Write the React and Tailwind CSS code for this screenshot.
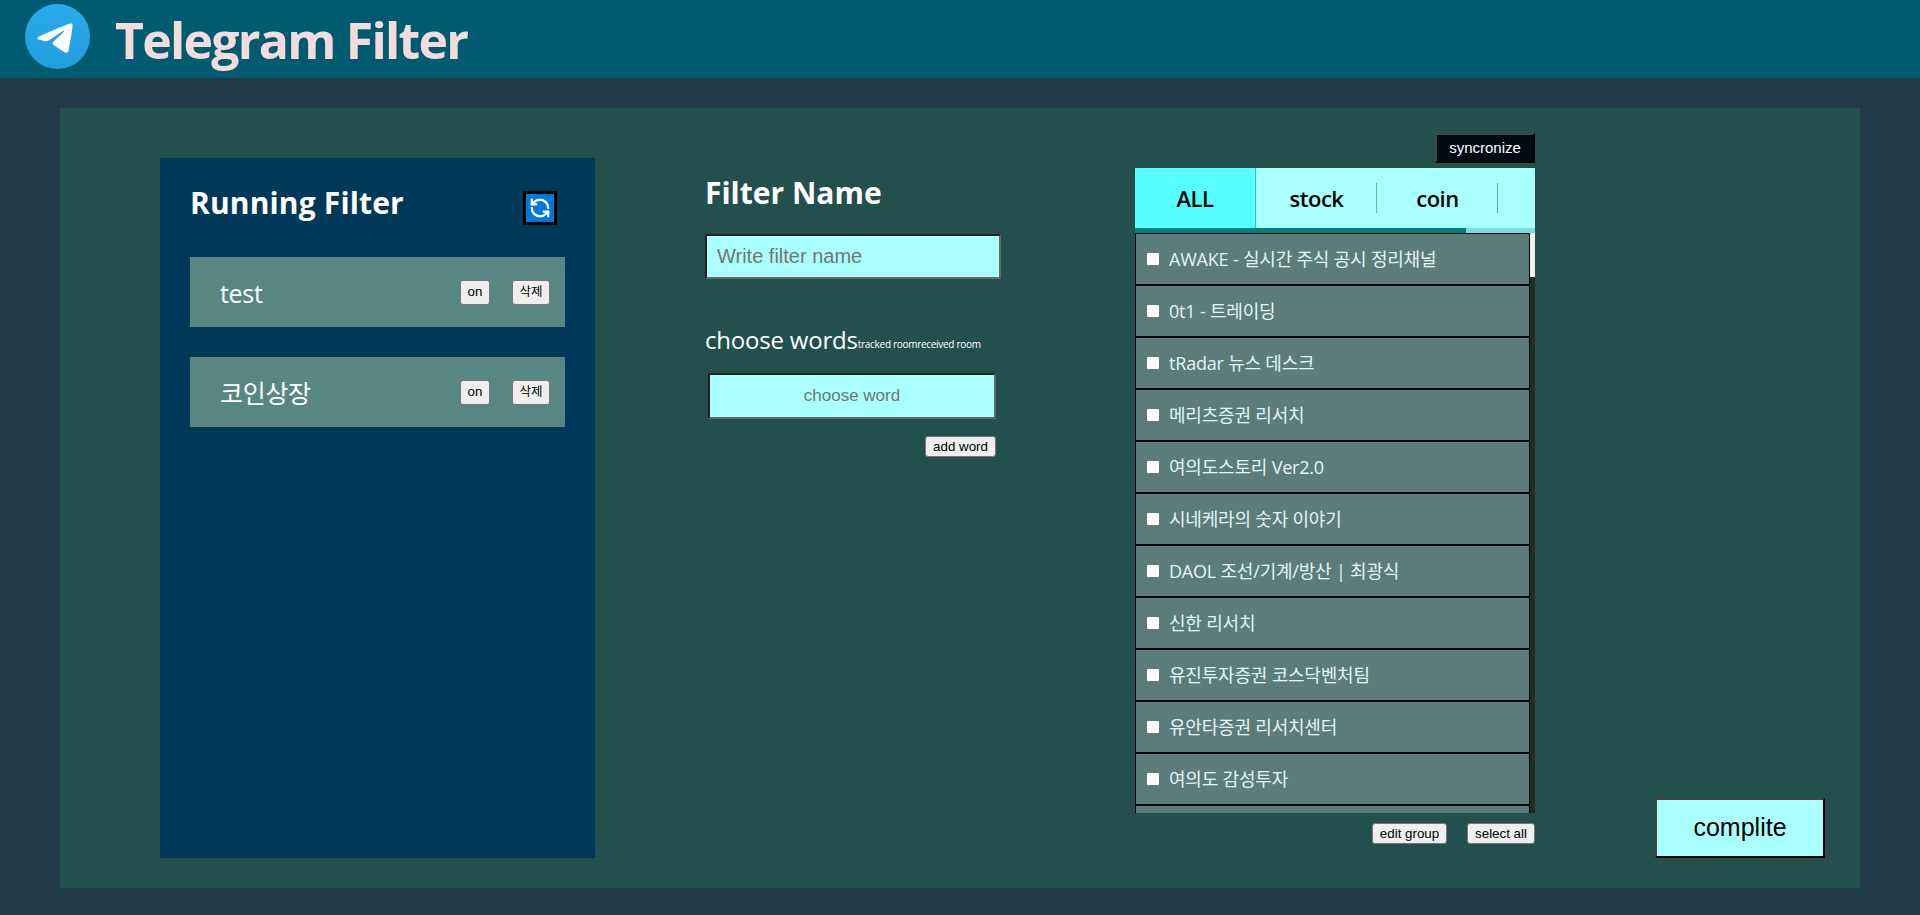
import { RefreshCcw } from "lucide-react";

const sans = "font-['Open_Sans','Noto_Sans_CJK_KR',sans-serif]";
const arial = "font-['Liberation_Sans','Noto_Sans_CJK_KR',sans-serif]";

const rooms = [
  "AWAKE - 실시간 주식 공시 정리채널",
  "0t1 - 트레이딩",
  "tRadar 뉴스 데스크",
  "메리츠증권 리서치",
  "여의도스토리 Ver2.0",
  "시네케라의 숫자 이야기",
  "DAOL 조선/기계/방산 | 최광식",
  "신한 리서치",
  "유진투자증권 코스닥벤처팀",
  "유안타증권 리서치센터",
  "여의도 감성투자",
  "",
];

function SmallButton({ className = "", children }) {
  return (
    <button className={`flex items-center justify-center bg-[#efefef] border border-[#767676] rounded-[3px] text-black text-[13.33px] ${arial} ${className}`}>
      {children}
    </button>
  );
}

function TelegramLogo() {
  return (
    <svg viewBox="0 0 24 24" className="w-[65px] h-[65px] ml-[25px] mt-[4px] self-start shrink-0">
      <defs>
        <linearGradient id="tg" x1="0" y1="0" x2="0" y2="1">
          <stop offset="0" stopColor="#2AABEE" />
          <stop offset="1" stopColor="#229ED9" />
        </linearGradient>
      </defs>
      <circle cx="12" cy="12" r="12" fill="url(#tg)" />
      <path
        fill="#fff"
        d="M16.906 7.224c.1-.002.321.023.465.14a.506.506 0 0 1 .171.325c.016.093.036.306.02.472-.18 1.898-.962 6.502-1.36 8.627-.168.9-.499 1.201-.82 1.23-.696.065-1.225-.46-1.9-.902-1.056-.693-1.653-1.124-2.678-1.8-1.185-.78-.417-1.21.258-1.91.177-.184 3.247-2.977 3.307-3.23.007-.032.014-.15-.056-.212s-.174-.041-.249-.024c-.106.024-1.793 1.14-5.061 3.345-.48.33-.913.49-1.302.48-.428-.008-1.252-.241-1.865-.44-.752-.245-1.349-.374-1.297-.789.027-.216.325-.437.893-.663 3.498-1.524 5.83-2.529 6.998-3.014 3.332-1.386 4.025-1.627 4.476-1.635z"
      />
    </svg>
  );
}

function FilterRow({ name }) {
  return (
    <div className="flex items-center h-[70px] mb-[30px] bg-[#588782] pl-[30px]">
      <span className={`pt-[3px] text-[25px] tracking-[-0.3px] text-white ${sans}`}>{name}</span>
      <SmallButton className="ml-auto w-[30px] h-[25px]">on</SmallButton>
      <SmallButton className="ml-[22px] mr-[15px] w-[38px] h-[25px] !text-[12.5px]">삭제</SmallButton>
    </div>
  );
}

function Tab({ label, active, divider }) {
  return (
    <div className={`relative flex items-center justify-center w-[121px] h-full text-[22px] font-semibold tracking-[-0.5px] text-black ${sans} ${active ? "bg-[#55ffff] border-r border-[#4db8b8]" : ""}`}>
      {label}
      {divider && <span className="absolute right-0 top-[15px] h-[30px] w-px bg-[#4db8b8]" />}
    </div>
  );
}

export default function App() {
  return (
    <div className="min-h-screen bg-[#203a4a] pb-[27px]">
      <header className="flex items-center h-[78px] bg-[#005b70]">
        <TelegramLogo />
        <h1 className={`ml-[25px] pt-[2px] text-[50px] font-bold tracking-[-1.75px] text-[#f5dcdc] ${sans}`}>Telegram Filter</h1>
      </header>

      <main className="flex mt-[30px] mx-[60px] h-[780px] bg-[#23504d]">
        <section className="w-[435px] h-[700px] ml-[100px] mt-[50px] bg-[#00385a] px-[30px]">
          <div className="flex items-center justify-between h-[99px] pr-[8px]">
            <h2 className={`mb-[10px] text-[30px] font-bold tracking-[0.15px] text-white ${sans}`}>Running Filter</h2>
            <button className="flex items-center justify-center w-[34px] h-[34px] bg-[#0078d7] border-[3px] border-black text-white">
              <RefreshCcw size={22} strokeWidth={2.5} />
            </button>
          </div>
          <FilterRow name="test" />
          <FilterRow name="코인상장" />
        </section>

        <section className="w-[296px] ml-[110px] mt-[62px]">
          <h2 className={`text-[30px] font-bold text-white ${sans}`}>Filter Name</h2>
          <input
            className={`block w-[296px] h-[45px] mt-[19px] px-[10px] bg-[#aaffff] border-2 border-t-[#222] border-l-[#222] border-r-[#666] border-b-[#666] text-[20px] placeholder:text-[#757575] ${arial}`}
            placeholder="Write filter name"
          />
          <div className={`flex items-end mt-[43px] text-white ${sans}`}>
            <span className="text-[24px] tracking-[-0.2px]">choose words</span>
            <span className="text-[10px] tracking-[-0.3px] mb-[6px]">tracked room</span>
            <span className="text-[10px] tracking-[-0.3px] mb-[6px]">received room</span>
          </div>
          <button className={`block w-[288px] h-[46px] mt-[15px] ml-[3px] bg-[#aaffff] border-2 border-t-[#222] border-l-[#222] border-r-[#666] border-b-[#666] text-[17px] text-[#757575] ${arial}`}>
            choose word
          </button>
          <SmallButton className="w-[71px] h-[21px] mt-[17px] ml-[220px]">add word</SmallButton>
        </section>

        <section className="w-[400px] ml-[134px] mt-[25px]">
          <button className={`block w-[100px] h-[30px] ml-auto bg-[#000c14] border-2 border-t-[#444] border-l-[#444] border-r-black border-b-black text-[15px] text-white ${arial}`}>
            syncronize
          </button>
          <div className="flex h-[60px] mt-[5px] bg-[#aaffff]">
            <Tab label="ALL" active />
            <Tab label="stock" divider />
            <Tab label="coin" divider />
          </div>
          <div className="h-[5px] bg-[#77e0e0]">
            <div className="w-[331px] h-full bg-[#008080]" />
          </div>
          <div className="flex h-[580px] overflow-hidden">
            <ul className="w-[395px]">
              {rooms.map((room, i) => (
                <li key={i} className="flex items-center h-[52px] shrink-0 bg-[#5c7c7a] border border-black pl-[11px]">
                  <span className="w-[12px] h-[12px] bg-white rounded-[1px] shrink-0" />
                  <span className={`ml-[10px] pt-[1px] text-[18px] tracking-[-0.2px] text-[#e2f5f5] ${sans}`}>{room}</span>
                </li>
              ))}
            </ul>
            <div className="w-[5px] bg-[#1f2d22]">
              <div className="h-[44px] bg-[#f1f1f1]" />
            </div>
          </div>
          <div className="flex justify-end gap-[20px] mt-[10px]">
            <SmallButton className="w-[75px] h-[21px]">edit group</SmallButton>
            <SmallButton className="w-[68px] h-[21px]">select all</SmallButton>
          </div>
        </section>

        <div className="flex-1 flex items-end justify-end pr-[35px] pb-[30px]">
          <button className={`w-[170px] h-[60px] bg-[#aaffff] border-2 border-t-[#444] border-l-[#444] border-r-black border-b-black text-[25px] text-black ${arial}`}>
            complite
          </button>
        </div>
      </main>
    </div>
  );
}
